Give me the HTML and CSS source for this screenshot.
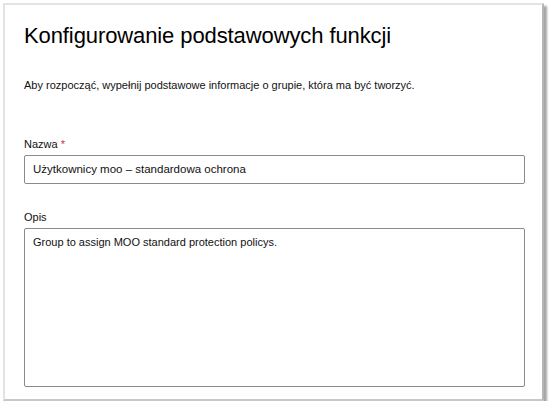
FILE: index.html
```html
<!DOCTYPE html>
<html lang="pl">
<head>
<meta charset="utf-8">
<title>Konfigurowanie podstawowych funkcji</title>
<link rel="stylesheet" href="styles.css">
</head>
<body>
<div class="card">
  <h1 class="title">Konfigurowanie podstawowych funkcji</h1>
  <p class="intro">Aby rozpocząć, wypełnij podstawowe informacje o grupie, która ma być tworzyć.</p>
  <div class="field">
    <label class="label">Nazwa <span class="req">*</span></label>
    <div class="input">Użytkownicy moo – standardowa ochrona</div>
  </div>
  <div class="field">
    <label class="label">Opis</label>
    <div class="textarea">Group to assign MOO standard protection policys.</div>
  </div>
</div>
</body>
</html>
```
FILE: styles.css
```css
html, body {
  margin: 0;
  padding: 0;
  background: #ffffff;
}
body {
  font-family: "Liberation Sans", Arial, sans-serif;
  color: #1b1b1b;
}
.card {
  box-sizing: border-box;
  margin: 3px 0 0 3px;
  width: 541px;
  height: 398px;
  border: 2px solid #e3e3e3;
  border-right-color: #b5b5b5;
  border-bottom-color: #c8c8c8;
  box-shadow: 3px 3px 2px rgba(0,0,0,0.35);
  padding: 0 0 0 19px;
  background: #fff;
}
.title {
  margin: 17px 0 0 0;
  font-size: 22px;
  font-weight: normal;
  line-height: 28px;
  color: #000;
  letter-spacing: -0.1px;
}
.intro {
  margin: 27px 0 0 0;
  font-size: 11px;
  line-height: 16px;
  color: #111;
}
.field {
  display: flex;
  flex-direction: column;
}
.field + .field {
  margin-top: 25px;
}
.intro + .field {
  margin-top: 43px;
}
.label {
  font-size: 11px;
  line-height: 16px;
  color: #111;
  margin-bottom: 3px;
}
.req {
  color: #c4314b;
}
.input, .textarea {
  box-sizing: border-box;
  width: 501px;
  border: 1px solid #8a8a8a;
  border-radius: 2px;
  font-size: 11px;
  color: #111;
  padding: 0 0 0 8px;
}
.input {
  height: 29px;
  line-height: 27px;
  font-size: 11.5px;
}
.textarea {
  height: 159px;
  padding-top: 6px;
  line-height: 14px;
}
```
